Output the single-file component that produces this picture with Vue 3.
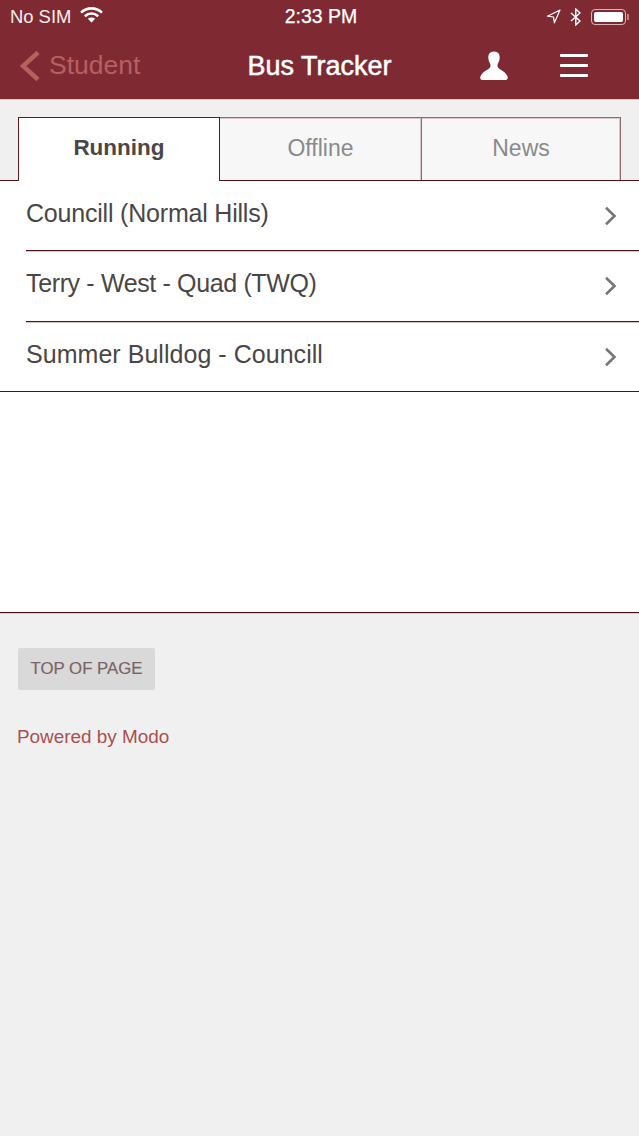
<script setup>
const tabs = [
  { label: 'Running', active: true },
  { label: 'Offline', active: false },
  { label: 'News', active: false },
]
const rows = ['Councill (Normal Hills)', 'Terry - West - Quad (TWQ)', 'Summer Bulldog - Councill']
</script>

<template>
  <div class="page">
    <header class="head">
      <div class="status">
        <div class="st-left">
          <span>No SIM</span>
          <svg width="23" height="16" viewBox="0 0 23 16" class="wifi">
            <path d="M1 5.6 C7 0 16 0 22 5.6" fill="none" stroke="#fff" stroke-width="2.6"/>
            <path d="M4.8 9.2 C8.8 5.6 14.2 5.6 18.2 9.2" fill="none" stroke="#fff" stroke-width="2.6"/>
            <path d="M7.8 11.8 C10 10 13 10 15.2 11.8 L11.5 15.6 Z" fill="#fff"/>
          </svg>
        </div>
        <div class="st-time">2:33 PM</div>
        <div class="st-right">
          <svg width="15" height="15" viewBox="0 0 15 15">
            <path d="M14 1 L1.5 7.2 L7.5 8 L8.4 13.8 Z" fill="none" stroke="#fff" stroke-width="1.2" stroke-linejoin="round"/>
          </svg>
          <svg width="12" height="18" viewBox="0 0 12 18">
            <path d="M1 5 L10 13 L5.8 17 L5.8 1 L10 5 L1 13" fill="none" stroke="#fff" stroke-width="1.4"/>
          </svg>
          <div class="batt"><div class="batt-in"></div></div>
          <div class="batt-tip"></div>
        </div>
      </div>
      <nav class="nav">
        <div class="back">
          <svg width="22" height="32" viewBox="0 0 22 32">
            <path d="M19 2.5 L4 16 L19 29.5" fill="none" stroke="#b85f5f" stroke-width="4.4"/>
          </svg>
          <span>Student</span>
        </div>
        <div class="title">Bus Tracker</div>
        <div class="nav-icons">
          <svg width="30" height="30" viewBox="0 0 30 30">
            <path d="M15 .5 C10.6 .5 9 3.6 9.4 7.6 C9.6 9.4 10 10.8 10.8 12 C11.6 13.2 11.8 15 11 16.4 C9.6 18.6 3 20.4 1.4 25.6 C1 27.2 1.4 29 3 29 L27 29 C28.6 29 29 27.2 28.6 25.6 C27 20.4 20.4 18.6 19 16.4 C18.2 15 18.4 13.2 19.2 12 C20 10.8 20.4 9.4 20.6 7.6 C21 3.6 19.4 .5 15 .5 Z" fill="#fff"/>
          </svg>
          <div class="burger"><i></i><i></i><i></i></div>
        </div>
      </nav>
    </header>

    <div class="tabs">
      <div v-for="t in tabs" :key="t.label" class="tab" :class="{ active: t.active }">{{ t.label }}</div>
    </div>

    <ul class="list">
      <li v-for="r in rows" :key="r" class="row">
        <div class="row-in">
          <span>{{ r }}</span>
          <svg width="14" height="20" viewBox="0 0 14 20">
            <path d="M2 1.8 L10.5 10 L2 18.2" fill="none" stroke="#77757a" stroke-width="2.6"/>
          </svg>
        </div>
      </li>
    </ul>

    <div class="blank"></div>

    <footer class="foot">
      <div class="top-btn">TOP OF PAGE</div>
      <div class="powered">Powered by Modo</div>
    </footer>
  </div>
</template>

<style>
html, body { margin: 0; background: #f0f0f0; }
</style>

<style scoped>
.page {
  width: 639px;
  height: 1136px;
  background: #f0f0f0;
  font-family: "Liberation Sans", Arial, sans-serif;
  overflow: hidden;
  display: flex;
  flex-direction: column;
}
.head {
  background: #7f2a33;
  height: 100px;
  box-sizing: border-box;
  border-bottom: 1px solid #e3c5c5;
  color: #fff;
  flex: none;
}
.status {
  height: 33px;
  display: flex;
  align-items: center;
  justify-content: space-between;
  position: relative;
  padding: 0 10px 0 10px;
  font-size: 18.4px;
  box-sizing: border-box;
}
.st-left { display: flex; align-items: center; gap: 9px; color: #fbeeee; }
.wifi { margin-top: -3px; }
.st-time {
  position: absolute;
  left: 3px;
  right: 0;
  text-align: center;
  font-size: 19.5px;
  -webkit-text-stroke: 0.25px #fff;
  pointer-events: none;
}
.st-right { display: flex; align-items: center; }
.st-right svg:first-child { margin-right: 9px; }
.st-right svg:nth-child(2) { margin-right: 9px; }
.batt {
  width: 35px;
  height: 16px;
  box-sizing: border-box;
  border: 1px solid #d9b4b7;
  border-radius: 4px;
  padding: 2px;
}
.batt-in { height: 100%; background: #fff; border-radius: 2px; }
.batt-tip { width: 2px; height: 6px; background: #b98489; margin-left: 1px; }
.nav {
  height: 66px;
  display: flex;
  align-items: center;
  position: relative;
  padding: 0 51px 0 19px;
}
.back {
  display: flex;
  align-items: center;
  gap: 8px;
  color: #b85f5f;
  font-size: 26.5px;
}
.back span { margin-top: -1px; }
.title {
  position: absolute;
  left: 0;
  right: 0;
  text-align: center;
  font-size: 27px;
  font-weight: 400;
  -webkit-text-stroke: 0.5px #fff;
  pointer-events: none;
}
.nav-icons {
  margin-left: auto;
  display: flex;
  align-items: center;
  gap: 51px;
}
.burger { width: 28px; display: flex; flex-direction: column; gap: 7px; margin-top: -2px; }
.burger i { display: block; height: 3px; background: #fff; border-radius: 1px; }
.tabs {
  display: flex;
  padding: 17px 18px 0;
  height: 80px;
  box-sizing: border-box;
  flex: none;
}
.tab {
  height: 63px;
  box-sizing: border-box;
  width: 202px;
  flex: none;
  border: 1px solid #8f6a6f;
  border-left: none;
  border-bottom: none;
  background: #f7f7f8;
  box-shadow: inset -1px 0 0 #d8c6c8, inset 0 1px 0 #d8c6c8;
  color: #8a8a8c;
  font-size: 23px;
  line-height: 60px;
  text-align: center;
}
.tab:last-child { width: 199px; }
.tab.active {
  width: 202px;
  border: 1px solid #5a1a20;
  border-bottom: none;
  background: #fff;
  box-shadow: none;
  color: #4a4648;
  font-size: 22.5px;
  font-weight: 700;
  position: relative;
  height: 64px;
  z-index: 1;
}
.list {
  list-style: none;
  margin: 0;
  padding: 0;
  background: #fff;
  border-top: 1px solid #4f1218;
  flex: none;
}
.row { height: 70.33px; padding-left: 26px; box-sizing: border-box; }
.row-in {
  height: 100%;
  box-sizing: border-box;
  border-bottom: 1px solid #4f1218;
  box-shadow: 0 1px 0 #dcc4c4;
  display: flex;
  align-items: center;
  justify-content: space-between;
  padding: 0 21px 0 0;
  font-size: 25px;
  color: #4a4648;
}
.row-in span { margin-top: -4px; }
.row-in svg { margin-top: 1px; }
.row:nth-child(1) .row-in span { letter-spacing: -0.2px; }
.row:nth-child(2) .row-in span { letter-spacing: -0.36px; }
.row:nth-child(3) .row-in span { letter-spacing: 0.04px; }
.row:last-child { padding-left: 0; }
.row:last-child .row-in { padding-left: 26px; }
.blank {
  height: 220px;
  background: #fff;
  border-bottom: 1px solid #4f1218;
  box-shadow: 0 1px 0 #dcc4c4;
  flex: none;
}
.foot { padding: 35px 18px 0; }
.top-btn {
  width: 137px;
  height: 42px;
  box-sizing: border-box;
  background: #d9d9d9;
  border-radius: 2px;
  color: #7a6468;
  font-size: 16.8px;
  -webkit-text-stroke: 0.2px #7a6468;
  line-height: 41px;
  text-align: center;
}
.powered {
  margin-top: 35px;
  margin-left: -1px;
  color: #aa5050;
  font-size: 18.9px;
  line-height: 24px;
}
</style>
